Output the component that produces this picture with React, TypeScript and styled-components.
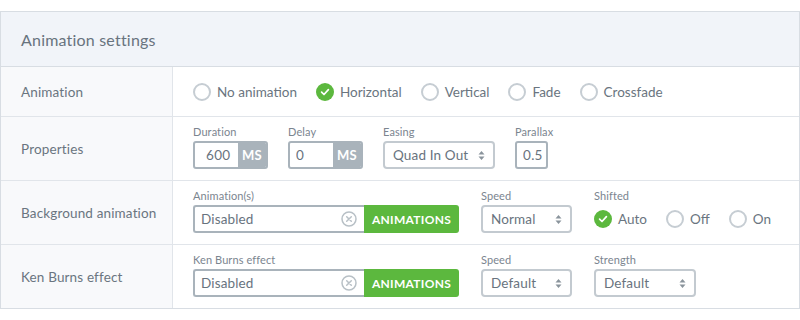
import { ReactNode } from "react";
import styled, { createGlobalStyle } from "styled-components";

const GlobalStyle = createGlobalStyle`
  * { box-sizing: border-box; }
  body {
    margin: 0;
    background: #fff;
    font-family: Lato, "Liberation Sans", sans-serif;
    color: #68737e;
  }
`;

const GREEN = "#5cb83e";
const FIELD_BORDER = "#a9b3bb";

const Page = styled.div`
  padding-top: 11px;
  width: 800px;
`;

const Panel = styled.section`
  border: 1px solid #d8dde3;
  background: #fff;
`;

const Header = styled.header`
  height: 55px;
  display: flex;
  align-items: center;
  padding-left: 20px;
  background: #f1f4f9;
  border-bottom: 1px solid #d8dde3;
  font-size: 16px;
  letter-spacing: 0.2px;
  color: #68737e;
`;

const Row = styled.div<{ $h: number }>`
  display: grid;
  grid-template-columns: 172px 1fr;
  height: ${(p) => p.$h}px;
  border-bottom: 1px solid #e1e5ea;
  &:last-child {
    border-bottom: none;
  }
`;

const RowLabel = styled.div`
  display: flex;
  align-items: center;
  padding-left: 20px;
  background: #f8f9fb;
  border-right: 1px solid #e1e5ea;
  font-size: 13.5px;
  letter-spacing: 0.15px;
  color: #6a7580;
`;

const RowBody = styled.div<{ $gap?: number }>`
  display: flex;
  align-items: center;
  padding-left: 20px;
  gap: ${(p) => p.$gap ?? 20}px;
`;

const Field = styled.div`
  display: flex;
  flex-direction: column;
  gap: 3px;
  margin-top: -3px;
`;

const FieldLabel = styled.span`
  font-size: 11px;
  line-height: 13px;
  letter-spacing: 0.1px;
  color: #7b858f;
`;

const Box = styled.div<{ $w: number }>`
  display: flex;
  width: ${(p) => p.$w}px;
  height: 28px;
  border: 2px solid ${FIELD_BORDER};
  border-radius: 3px;
  overflow: hidden;
  background: #fff;
`;

const TextInput = styled.input<{ $pad: number }>`
  flex: 1;
  min-width: 0;
  border: none;
  outline: none;
  padding: 0 0 0 ${(p) => p.$pad}px;
  font: 13.5px Lato, "Liberation Sans", sans-serif;
  letter-spacing: 0.3px;
  color: #68737e;
  background: transparent;
`;

const Addon = styled.span`
  display: flex;
  align-items: center;
  justify-content: center;
  width: 28px;
  background: ${FIELD_BORDER};
  color: #fff;
  font-size: 13px;
  font-weight: 700;
  letter-spacing: 0.3px;
`;

const SelectBox = styled.div<{ $w: number }>`
  position: relative;
  width: ${(p) => p.$w}px;
  height: 28px;
  border: 2px solid #c3cad0;
  border-radius: 4px;
  background: #fff;
  svg {
    position: absolute;
    right: 8px;
    top: 7px;
    pointer-events: none;
  }
`;

const Select = styled.select`
  appearance: none;
  width: 100%;
  height: 100%;
  border: none;
  outline: none;
  background: transparent;
  padding-left: 8px;
  font: 13.5px Lato, "Liberation Sans", sans-serif;
  letter-spacing: 0.15px;
  color: #68737e;
`;

const Group = styled.div`
  display: flex;
  width: 266px;
  height: 28px;
`;

const GroupInput = styled.div`
  flex: 1;
  display: flex;
  align-items: center;
  justify-content: space-between;
  padding: 0 7px 0 6px;
  border: 2px solid ${FIELD_BORDER};
  border-right: none;
  border-radius: 3px 0 0 3px;
  font-size: 13.5px;
  letter-spacing: 0.15px;
  color: #68737e;
`;

const GreenButton = styled.button`
  width: 95px;
  border: none;
  border-radius: 0 3px 3px 0;
  background: ${GREEN};
  color: #fff;
  font: 700 12px Lato, "Liberation Sans", sans-serif;
  letter-spacing: 0.3px;
  padding: 0;
`;

const RadioList = styled.div<{ $gap: number }>`
  display: flex;
  align-items: center;
  gap: ${(p) => p.$gap}px;
`;

const RadioItem = styled.label`
  display: flex;
  align-items: center;
  gap: 6px;
  font-size: 13.5px;
  color: #6a7580;
`;

const Circle = styled.span<{ $on: boolean }>`
  display: flex;
  align-items: center;
  justify-content: center;
  width: 18px;
  height: 18px;
  border-radius: 50%;
  border: ${(p) => (p.$on ? "none" : "2px solid #c6cdd3")};
  background: ${(p) => (p.$on ? GREEN : "#fff")};
`;

const Arrows = () => (
  <svg width="7" height="11" viewBox="0 0 7 11">
    <path d="M3.5 1 L6.5 4.5 H0.5 Z M3.5 10 L6.5 6.5 H0.5 Z" fill="#8a949c" />
  </svg>
);

const ClearIcon = () => (
  <svg width="16" height="16" viewBox="0 0 16 16">
    <circle cx="8" cy="8" r="7" fill="none" stroke="#b8c0c6" strokeWidth="1.5" />
    <path d="M5.7 5.7 L10.3 10.3 M10.3 5.7 L5.7 10.3" stroke="#b8c0c6" strokeWidth="1.5" strokeLinecap="round" />
  </svg>
);

const Radio = ({ label, on = false }: { label: string; on?: boolean }) => (
  <RadioItem>
    <Circle $on={on}>
      {on && (
        <svg width="12" height="12" viewBox="0 0 12 12">
          <path d="M2.6 6.2 L5 8.5 L9.4 3.6" fill="none" stroke="#fff" strokeWidth="1.7" strokeLinecap="round" strokeLinejoin="round" />
        </svg>
      )}
    </Circle>
    {label}
  </RadioItem>
);

const LabeledField = ({ label, children }: { label: string; children: ReactNode }) => (
  <Field>
    <FieldLabel>{label}</FieldLabel>
    {children}
  </Field>
);

const Dropdown = ({ w, value }: { w: number; value: string }) => (
  <SelectBox $w={w}>
    <Select defaultValue={value}>
      <option>{value}</option>
    </Select>
    <Arrows />
  </SelectBox>
);

const AnimationsPicker = () => (
  <Group>
    <GroupInput>
      Disabled
      <ClearIcon />
    </GroupInput>
    <GreenButton>ANIMATIONS</GreenButton>
  </Group>
);

export default function App() {
  return (
    <Page>
      <GlobalStyle />
      <Panel>
        <Header>Animation settings</Header>

        <Row $h={50}>
          <RowLabel>Animation</RowLabel>
          <RowBody>
            <RadioList $gap={19}>
              <Radio label="No animation" />
              <Radio label="Horizontal" on />
              <Radio label="Vertical" />
              <Radio label="Fade" />
              <Radio label="Crossfade" />
            </RadioList>
          </RowBody>
        </Row>

        <Row $h={64}>
          <RowLabel>Properties</RowLabel>
          <RowBody>
            <LabeledField label="Duration">
              <Box $w={75}>
                <TextInput $pad={11} defaultValue="600" />
                <Addon>MS</Addon>
              </Box>
            </LabeledField>
            <LabeledField label="Delay">
              <Box $w={75}>
                <TextInput $pad={6} defaultValue="0" />
                <Addon>MS</Addon>
              </Box>
            </LabeledField>
            <LabeledField label="Easing">
              <Dropdown w={112} value="Quad In Out" />
            </LabeledField>
            <LabeledField label="Parallax">
              <Box $w={33}>
                <TextInput $pad={6} defaultValue="0.5" />
              </Box>
            </LabeledField>
          </RowBody>
        </Row>

        <Row $h={64}>
          <RowLabel>Background animation</RowLabel>
          <RowBody $gap={22}>
            <LabeledField label="Animation(s)">
              <AnimationsPicker />
            </LabeledField>
            <LabeledField label="Speed">
              <Dropdown w={91} value="Normal" />
            </LabeledField>
            <LabeledField label="Shifted">
              <RadioList $gap={19} style={{ height: 28 }}>
                <Radio label="Auto" on />
                <Radio label="Off" />
                <Radio label="On" />
              </RadioList>
            </LabeledField>
          </RowBody>
        </Row>

        <Row $h={63}>
          <RowLabel>Ken Burns effect</RowLabel>
          <RowBody $gap={22}>
            <LabeledField label="Ken Burns effect">
              <AnimationsPicker />
            </LabeledField>
            <LabeledField label="Speed">
              <Dropdown w={91} value="Default" />
            </LabeledField>
            <LabeledField label="Strength">
              <Dropdown w={102} value="Default" />
            </LabeledField>
          </RowBody>
        </Row>
      </Panel>
    </Page>
  );
}
